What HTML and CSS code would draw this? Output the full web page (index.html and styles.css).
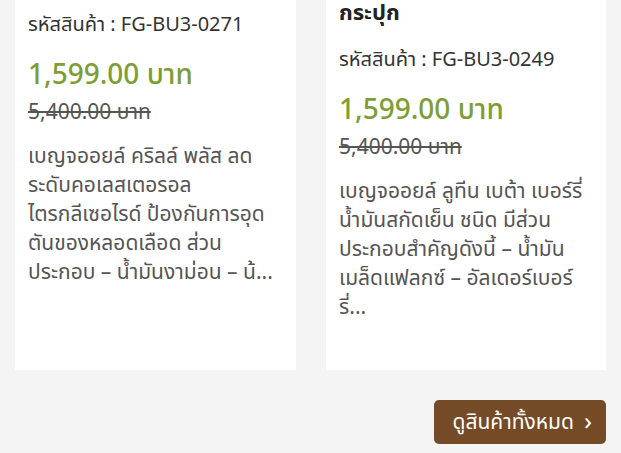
FILE: index.html
```html
<!DOCTYPE html>
<html lang="th">
<head>
    <meta charset="UTF-8">
    <meta name="viewport" content="width=device-width, initial-scale=1.0">
    <title>สินค้าแนะนำ</title>
    <link rel="stylesheet" href="styles.css">
</head>
<body>

    <section class="products">
        <div class="product-list">
            <div class="product-card">
                <h3 class="product-title">เบญจออยล์ คริลล์ พลัส ชนิดแคปซูล 30 แคปซูล</h3>
                <div class="product-code">รหัสสินค้า : FG-BU3-0271</div>
                <div class="price">1,599.00 บาท</div>
                <div class="old-price">5,400.00 บาท</div>
                <p class="description">เบญจออยล์ คริลล์ พลัส ลดระดับคอเลสเตอรอล ไตรกลีเซอไรด์ ป้องกันการอุดตันของหลอดเลือด ส่วนประกอบ – น้ำมันงาม่อน – น้...</p>
            </div>

            <div class="product-card">
                <h3 class="product-title">เบญจออยล์ ลูทีน เบต้า เบอร์รี่ ชนิดแคปซูลนิ่ม<br>กระปุก</h3>
                <div class="product-code">รหัสสินค้า : FG-BU3-0249</div>
                <div class="price">1,599.00 บาท</div>
                <div class="old-price">5,400.00 บาท</div>
                <p class="description">เบญจออยล์ ลูทีน เบต้า เบอร์รี่ น้ำมันสกัดเย็น ชนิด มีส่วนประกอบสำคัญดังนี้ – น้ำมันเมล็ดแฟลกซ์ – อัลเดอร์เบอร์รี่...</p>
            </div>
        </div>

        <div class="more">
            <a href="#" class="more-btn">ดูสินค้าทั้งหมด <span class="arrow">›</span></a>
        </div>
    </section>

</body>
</html>
```

FILE: styles.css
```css
* {
    box-sizing: border-box;
}

body {
    font-family: "Noto Sans Thai", "Noto Sans", sans-serif;
    margin: 0;
    padding: 0;
    background-color: #f4f4f4;
    color: #333;
    overflow: hidden;
}

/* PRODUCTS */
.products {
    padding: 0 15px;
    margin-top: -74px;
}

.product-list {
    display: grid;
    grid-template-columns: 281px 280px;
    gap: 30px;
}

.product-card {
    background-color: #fff;
    padding: 0 13px 48px;
}

.product-title {
    font-size: 22px;
    font-weight: bold;
    color: #222;
    line-height: 35px;
    margin: 0 0 14px;
}

.product-code {
    font-size: 20px;
    line-height: 30px;
    color: #333;
    margin-bottom: 18px;
}

.price {
    font-size: 28px;
    line-height: 36px;
    color: #7c9e34;
    font-weight: 500;
}

.old-price {
    font-size: 21px;
    line-height: 30px;
    color: #555;
    text-decoration: line-through;
    margin-top: 4px;
}

.description {
    font-size: 21px;
    line-height: 29px;
    color: #555;
    margin: 14px 0 0;
}

/* BUTTON */
.more {
    display: flex;
    justify-content: flex-end;
    margin-top: 30px;
}

.more-btn {
    background-color: #744b26;
    color: white;
    font-size: 21px;
    text-decoration: none;
    border-radius: 5px;
    height: 44px;
    padding: 0 14px 0 18px;
    display: flex;
    align-items: center;
    gap: 10px;
}

.more-btn .arrow {
    font-size: 26px;
}
```
